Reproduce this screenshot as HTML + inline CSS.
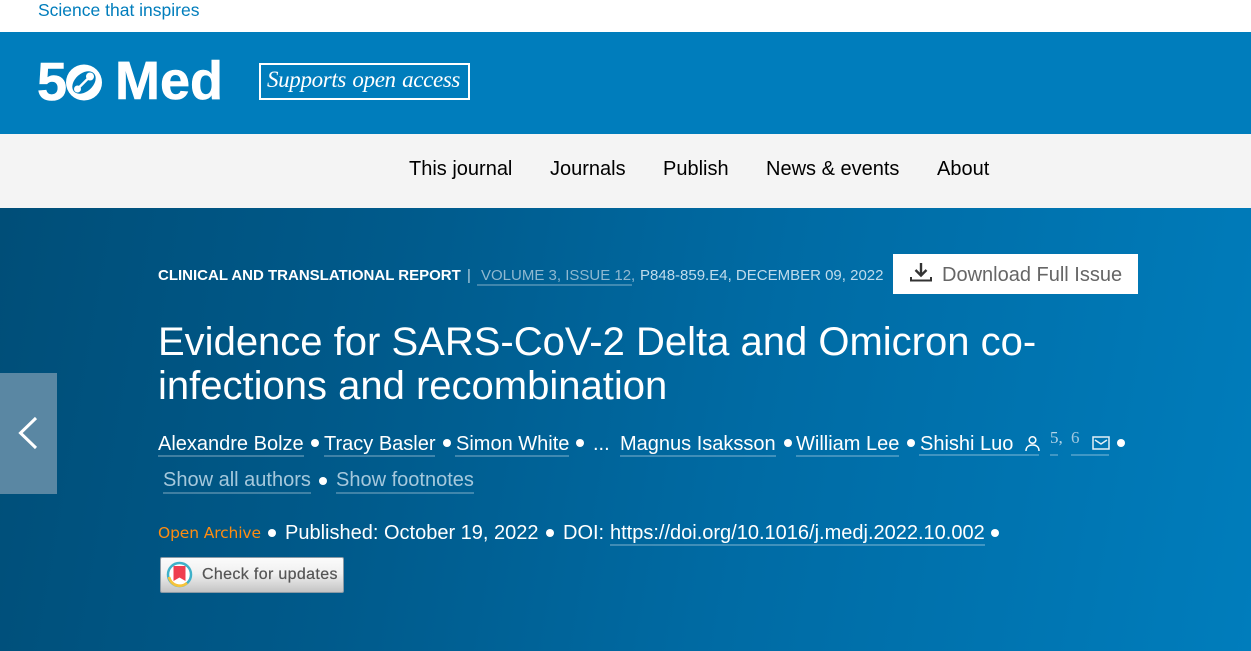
<!DOCTYPE html>
<html><head><meta charset="utf-8"><style>
html,body{margin:0;padding:0;width:1251px;height:651px;overflow:hidden;background:#fff;font-family:"Liberation Sans",Arial,sans-serif}
.a{position:absolute;white-space:nowrap}
.l{position:absolute;height:2px;background:rgba(255,255,255,.25)}
.d{position:absolute;width:8px;height:8px;border-radius:50%;background:#fff}
.t{font-size:20px;line-height:24px;color:#fff}
.m{color:#a5c8dc}
.n{font-size:20px;line-height:24px;color:#000;top:157px}
.c{top:267px;font-size:15px;line-height:18px}
</style></head><body>
<div class="a" style="left:38px;top:0;font-size:17.5px;line-height:20px;color:#007dbc">Science that inspires</div>
<div class="a" style="left:0;top:32px;width:1251px;height:102px;background:#007dbc"></div>
<div class="a" style="left:37px;top:51px;font-size:54px;line-height:62px;font-weight:bold;color:#fff;-webkit-text-stroke:.6px #fff">5</div>
<svg class="a" style="left:66px;top:62px" width="37" height="41" viewBox="0 0 37 41"><circle cx="18" cy="20.500" r="18" fill="#fff"/><ellipse cx="18" cy="20.500" rx="13.500" ry="9" transform="rotate(-42 18 20.500)" fill="#007dbc"/><circle cx="11.500" cy="27" r="3.500" fill="#fff"/><circle cx="24" cy="14.500" r="4" fill="#fff"/><path d="M11.500 27L24 14.500" stroke="#fff" stroke-width="2.500"/></svg>
<div class="a" style="left:115px;top:50px;font-size:54px;line-height:62px;font-weight:bold;color:#fff;-webkit-text-stroke:.6px #fff">Med</div>
<div class="a" style="left:259px;top:63px;width:207px;height:33px;border:2px solid #fff"></div>
<div class="a" style="left:267px;top:66px;font-family:'Liberation Serif',serif;font-style:italic;font-size:23px;line-height:28px;letter-spacing:-.35px;word-spacing:1px;color:#fff">Supports open access</div>
<div class="a" style="left:0;top:134px;width:1251px;height:74px;background:#f4f4f4"></div>
<div class="a n" style="left:409px">This journal</div>
<div class="a n" style="left:550px">Journals</div>
<div class="a n" style="left:663px">Publish</div>
<div class="a n" style="left:766px">News &amp; events</div>
<div class="a n" style="left:937px">About</div>
<div class="a" style="left:0;top:208px;width:1251px;height:443px;background:linear-gradient(100deg,#004e78 0%,#005a8b 30%,#006ba4 60%,#007dbc 100%)"></div>
<div class="a" style="left:0;top:373px;width:57px;height:121px;background:#5a87a3"></div>
<svg class="a" style="left:16px;top:414px" width="24" height="38" viewBox="0 0 24 38"><path d="M20 4L4.500 19 20 34" fill="none" stroke="#fff" stroke-width="3"/></svg>
<div class="a c" style="left:158px;font-weight:bold;color:#fff">CLINICAL AND TRANSLATIONAL REPORT</div>
<div class="a c" style="left:467px;color:#b5d2e2">|</div>
<div class="a c" style="left:481px;color:#8fb8d0">VOLUME 3, ISSUE 12,</div>
<div class="l" style="left:477px;top:284px;width:155px"></div>
<div class="a c" style="left:640px;color:#c0dcec">P848-859.E4, DECEMBER 09, 2022</div>
<div class="a" style="left:893px;top:254px;width:245px;height:40px;background:#fff"></div>
<svg class="a" style="left:909px;top:262px" width="24" height="20" viewBox="0 0 24 20"><path d="M12 1v12M6.500 8L12 13.500 17.500 8" fill="none" stroke="#333" stroke-width="2.400"/><path d="M2 15v3.500h20V15" fill="none" stroke="#333" stroke-width="2"/></svg>
<div class="a" style="left:942px;top:263px;font-size:20px;line-height:24px;color:#666">Download Full Issue</div>
<div class="a" style="left:158px;top:320px;font-size:40px;line-height:44px;color:#fff;width:920px">Evidence for SARS-CoV-2 Delta and Omicron co-<br>infections and recombination</div>
<div class="a t" style="left:158px;top:432px">Alexandre Bolze</div><div class="l" style="left:158px;top:455px;width:146px"></div>
<div class="d" style="left:311px;top:439px"></div>
<div class="a t" style="left:324px;top:432px">Tracy Basler</div><div class="l" style="left:324px;top:455px;width:111px"></div>
<div class="d" style="left:443px;top:439px"></div>
<div class="a t" style="left:456px;top:432px">Simon White</div><div class="l" style="left:455px;top:455px;width:114px"></div>
<div class="d" style="left:576px;top:439px"></div>
<div class="a t" style="left:593px;top:432px">...</div>
<div class="a t" style="left:620px;top:432px">Magnus Isaksson</div><div class="l" style="left:620px;top:455px;width:156px"></div>
<div class="d" style="left:784px;top:439px"></div>
<div class="a t" style="left:796px;top:432px">William Lee</div><div class="l" style="left:796px;top:455px;width:103px"></div>
<div class="d" style="left:907px;top:439px"></div>
<div class="a t" style="left:920px;top:432px">Shishi Luo</div><div class="l" style="left:919px;top:454px;width:120px"></div>
<svg class="a" style="left:1024px;top:435px" width="17" height="17" viewBox="0 0 17 17"><circle cx="8.500" cy="5" r="3.300" fill="none" stroke="#fff" stroke-width="1.500"/><path d="M2 16c0-4 2.500-6 6.500-6s6.500 2 6.500 6" fill="none" stroke="#fff" stroke-width="1.500"/></svg>
<div class="a" style="left:1050px;top:429px;font-family:'Liberation Serif',serif;font-size:17px;line-height:17px;color:#b5d5e8">5,</div><div class="l" style="left:1050px;top:454px;width:8px"></div>
<div class="a" style="left:1071px;top:429px;font-family:'Liberation Serif',serif;font-size:17px;line-height:17px;color:#a0c8e0">6</div><div class="l" style="left:1071px;top:454px;width:38px"></div>
<svg class="a" style="left:1092px;top:436px" width="18" height="14" viewBox="0 0 18 14"><rect x="1" y="1" width="16" height="12" fill="none" stroke="#e4f0f7" stroke-width="1.500"/><path d="M3 4l6 4 6-4" fill="none" stroke="#e4f0f7" stroke-width="1.500"/></svg>
<div class="d" style="left:1117px;top:439px"></div>
<div class="a t m" style="left:163px;top:468px">Show all authors</div><div class="l" style="left:163px;top:492px;width:148px"></div>
<div class="d" style="left:319px;top:477px"></div>
<div class="a t m" style="left:336px;top:468px">Show footnotes</div><div class="l" style="left:336px;top:492px;width:138px"></div>
<div class="a" style="left:158px;top:524px;font-family:'DejaVu Sans',sans-serif;font-size:15.500px;line-height:19px;letter-spacing:-.12px;color:#ff8c10">Open Archive</div>
<div class="d" style="left:268px;top:529px"></div>
<div class="a t" style="left:285px;top:521px">Published: October 19, 2022</div>
<div class="d" style="left:546px;top:529px"></div>
<div class="a t" style="left:563px;top:521px">DOI:</div>
<div class="a t" style="left:610px;top:521px">https://doi.org/10.1016/j.medj.2022.10.002</div><div class="l" style="left:610px;top:544px;width:375px"></div>
<div class="d" style="left:991px;top:529px"></div>
<div class="a" style="left:160px;top:557px;width:182px;height:34px;border:1px solid #8a9aa6;border-radius:2px;background:linear-gradient(#fbfbfb,#f0f0f0 45%,#c4c4c4)"></div>
<svg class="a" style="left:166px;top:561px" width="27" height="27" viewBox="0 0 27 27"><circle cx="13.500" cy="13.500" r="11.500" fill="#fff" stroke="#3fb1c9" stroke-width="2.500"/><path d="M3 16a11 11 0 0 0 18 6" fill="none" stroke="#f6c33b" stroke-width="2.800"/><path d="M7.500 5h12v15l-6-3.500-6 3.500z" fill="#ef3e4f"/></svg>
<div class="a" style="left:202px;top:566px;font-size:16px;line-height:18px;letter-spacing:.35px;color:#555;-webkit-text-stroke:.2px #555">Check for updates</div>
</body></html>
